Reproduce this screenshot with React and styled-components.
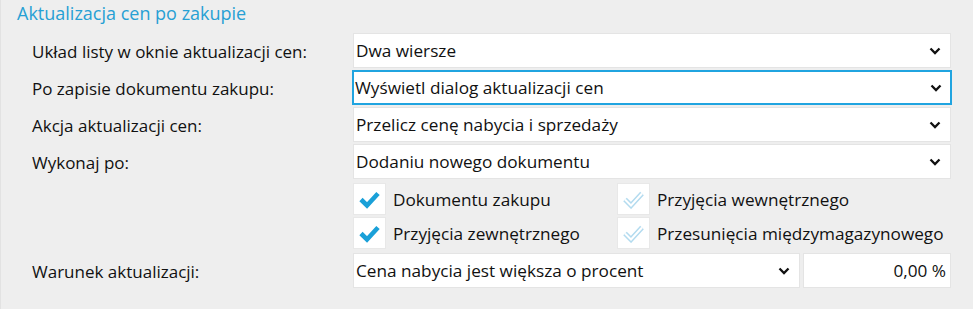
import React from 'react';
import styled, { createGlobalStyle } from 'styled-components';

const GlobalStyle = createGlobalStyle`
  html, body {
    margin: 0;
    padding: 0;
    background: #eeeeee;
  }
  body {
    font-family: "Open Sans", "Noto Sans", Arial, sans-serif;
    color: #111111;
  }
`;

const Panel = styled.section`
  width: 973px;
  height: 309px;
  box-sizing: border-box;
  background: #eeeeee;
  border-left: 1px solid #e2e2e2;
`;

const Title = styled.h2`
  margin: 0;
  padding: 0 0 0 16px;
  height: 31px;
  box-sizing: border-box;
  font-size: 18px;
  line-height: 26px;
  font-weight: 400;
  color: #27a0d4;
`;

const Form = styled.div`
  display: grid;
  grid-template-columns: 321px 598px;
  row-gap: 2px;
  padding: 2px 0 0 31px;
  align-items: center;
`;

const Label = styled.div`
  font-size: 17px;
  line-height: 22px;
  padding-top: 2px;
  white-space: nowrap;
`;

const Box = styled.div`
  height: 35px;
  box-sizing: border-box;
  display: flex;
  align-items: center;
  background: #ffffff;
  border: ${(p) => (p.$focused ? '2px solid #20a4e0' : '1px solid #e4e4e4')};
  padding: ${(p) => (p.$focused ? '0 8px 0 1px' : p.$right ? '0 4px 0 2px' : '0 9px 0 2px')};
  margin: ${(p) => (p.$focused ? '0 -1px' : '0')};
  font-size: 17.2px;
  flex: ${(p) => (p.$grow ? '1' : 'none')};
  width: ${(p) => (p.$width ? p.$width + 'px' : 'auto')};
  justify-content: ${(p) => (p.$right ? 'flex-end' : 'flex-start')};
`;

const BoxText = styled.span`
  flex: 1;
  white-space: nowrap;
`;

const SplitRow = styled.div`
  display: flex;
  gap: 3px;
`;

const Checks = styled.div`
  display: grid;
  grid-template-columns: 264px 1fr;
  grid-auto-rows: 32px;
  row-gap: 2px;
  margin: 2px 0;
`;

const CheckItem = styled.label`
  display: flex;
  align-items: center;
  gap: 7px;
  font-size: 17.2px;
  white-space: nowrap;
`;

const CheckBox = styled.span`
  width: 33px;
  height: 32px;
  flex: none;
  box-sizing: border-box;
  background: #ffffff;
  border: 1px solid #e8e8e8;
  display: flex;
  align-items: center;
  justify-content: center;
`;

function Chevron() {
  return (
    <svg width="12" height="8" viewBox="0 0 12 8">
      <path d="M1.5 1.5 L6 6 L10.5 1.5" fill="none" stroke="#111" strokeWidth="2.3" />
    </svg>
  );
}

function Tick({ on }) {
  const d = 'M3 9.5 L9 15.5 L20 3.5';
  return (
    <svg width="23" height="19" viewBox="0 0 23 19">
      {on ? (
        <path d={d} fill="none" stroke="#1aa0d8" strokeWidth="4.6" strokeLinejoin="miter" />
      ) : (
        <>
          <path d={d} fill="none" stroke="#b3dbef" strokeWidth="5" />
          <path d={d} fill="none" stroke="#ffffff" strokeWidth="2" />
        </>
      )}
    </svg>
  );
}

function Select({ value, focused, width, grow }) {
  return (
    <Box $focused={focused} $width={width} $grow={grow}>
      <BoxText>{value}</BoxText>
      <Chevron />
    </Box>
  );
}

function Check({ label, on }) {
  return (
    <CheckItem>
      <CheckBox>
        <Tick on={on} />
      </CheckBox>
      {label}
    </CheckItem>
  );
}

export default function App() {
  return (
    <Panel>
      <GlobalStyle />
      <Title>Aktualizacja cen po zakupie</Title>
      <Form>
        <Label>Układ listy w oknie aktualizacji cen:</Label>
        <Select value="Dwa wiersze" />

        <Label>Po zapisie dokumentu zakupu:</Label>
        <Select value="Wyświetl dialog aktualizacji cen" focused />

        <Label>Akcja aktualizacji cen:</Label>
        <Select value="Przelicz cenę nabycia i sprzedaży" />

        <Label>Wykonaj po:</Label>
        <Select value="Dodaniu nowego dokumentu" />

        <div />
        <Checks>
          <Check label="Dokumentu zakupu" on />
          <Check label="Przyjęcia wewnętrznego" />
          <Check label="Przyjęcia zewnętrznego" on />
          <Check label="Przesunięcia międzymagazynowego" />
        </Checks>

        <Label>Warunek aktualizacji:</Label>
        <SplitRow>
          <Select value="Cena nabycia jest większa o procent" grow />
          <Box $width={148} $right>
            0,00 %
          </Box>
        </SplitRow>
      </Form>
    </Panel>
  );
}
